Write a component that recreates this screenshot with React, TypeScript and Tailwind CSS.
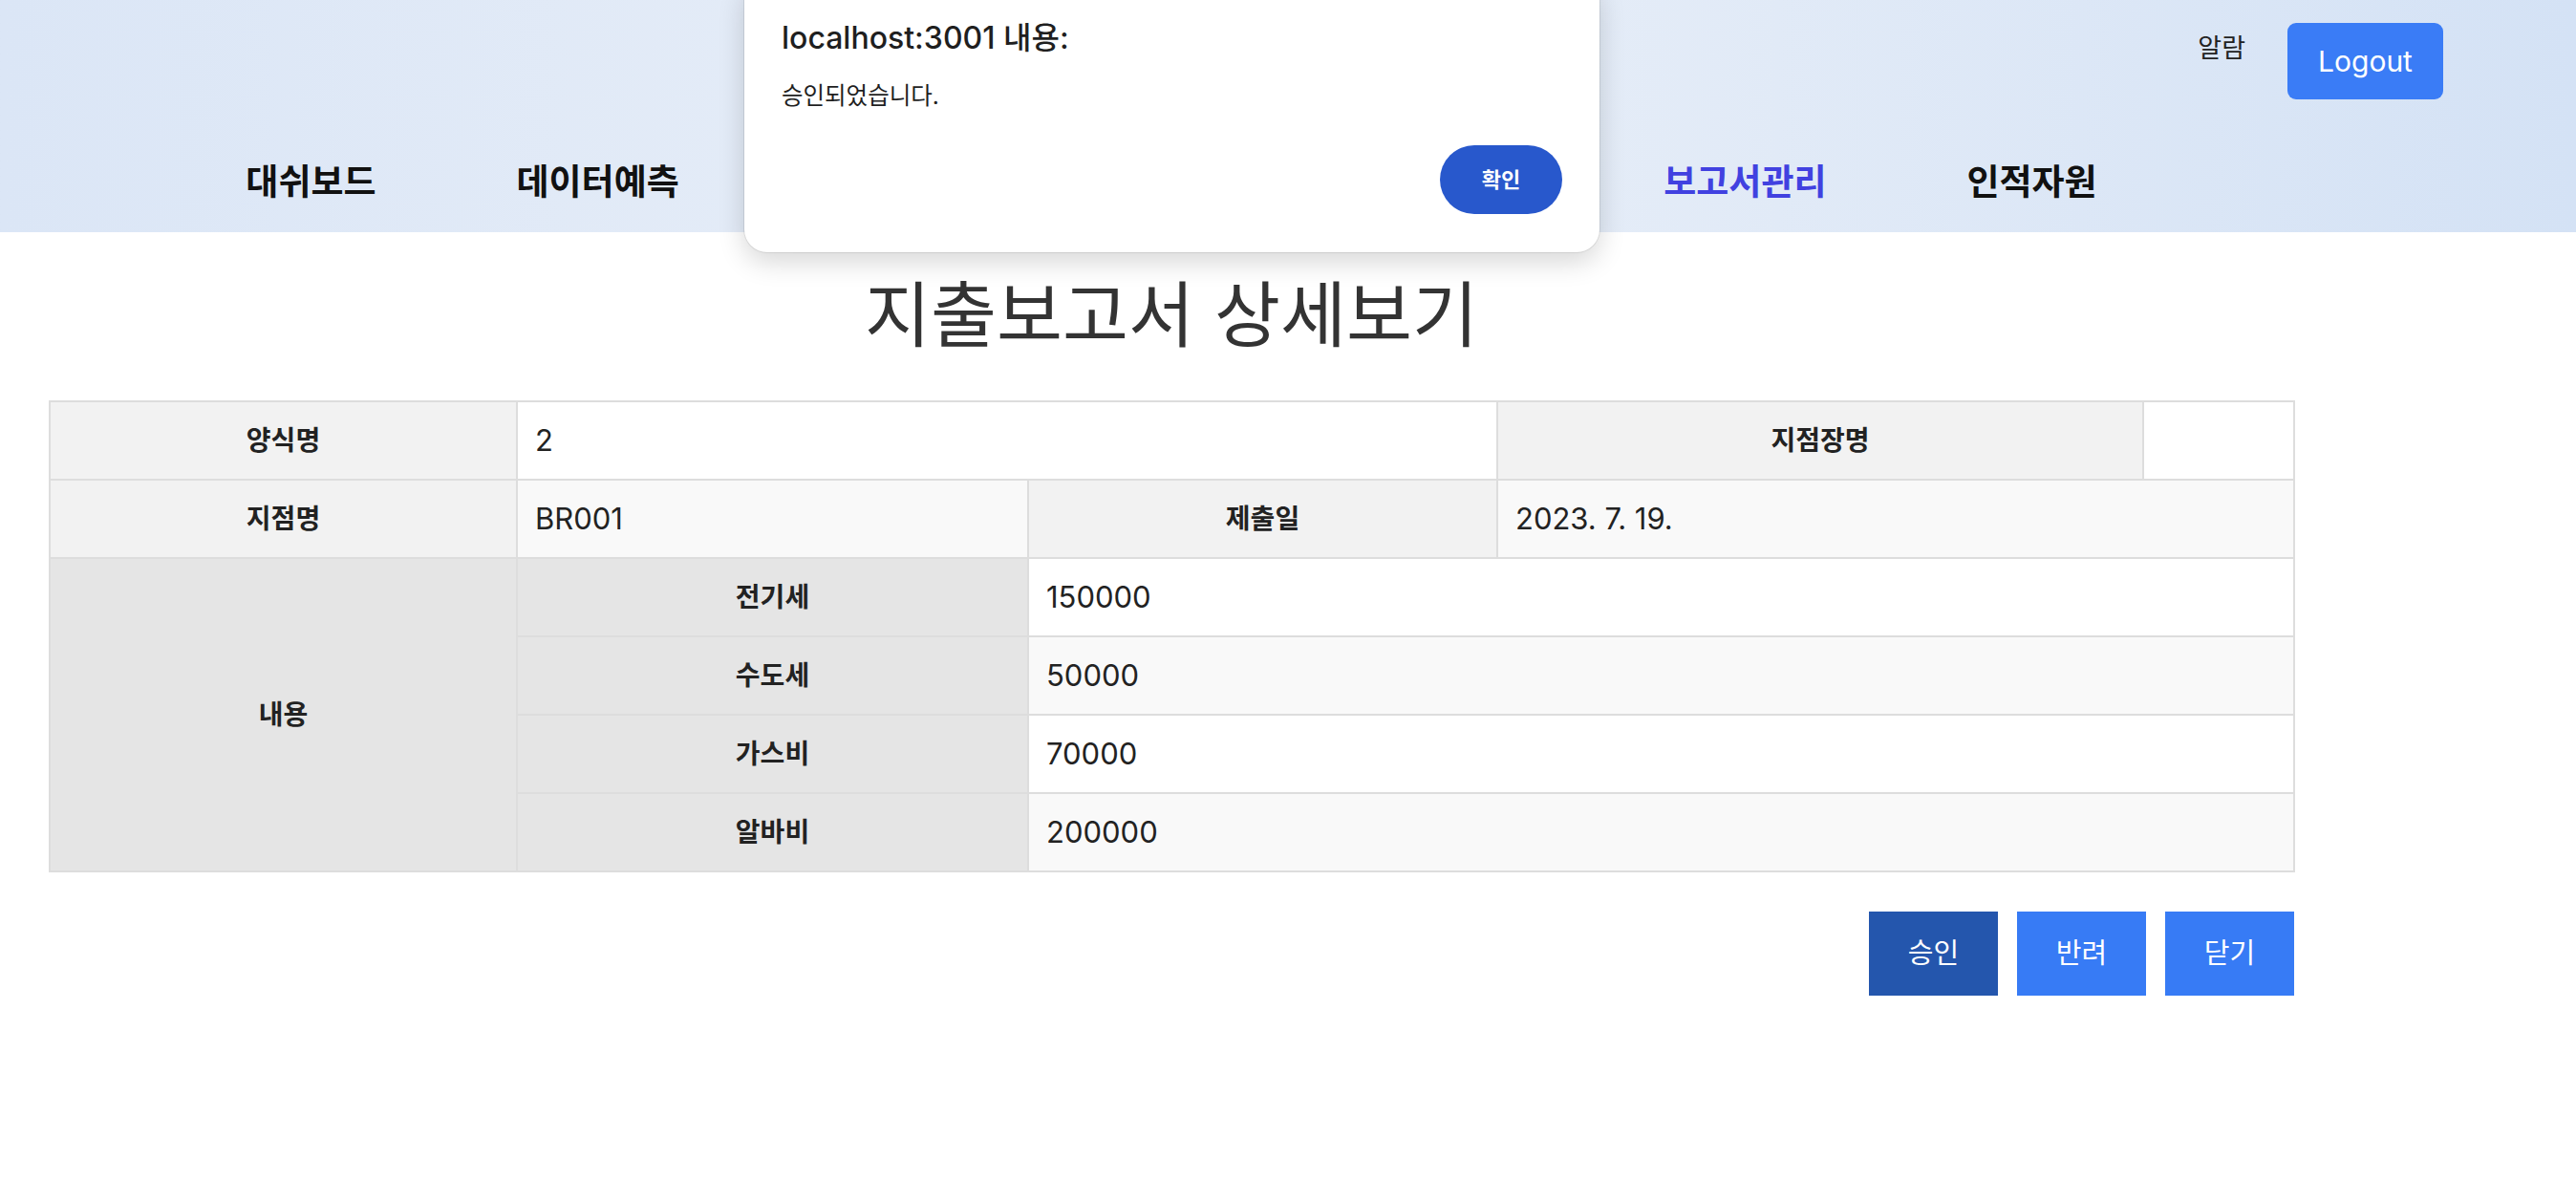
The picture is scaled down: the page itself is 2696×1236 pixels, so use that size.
import React from 'react';

const navItems = [
	{ name: '대쉬보드', active: false },
	{ name: '데이터예측', active: false },
	{ name: '재고관리', active: false },
	{ name: '발주관리', active: false },
	{ name: '가맹점관리', active: false },
	{ name: '보고서관리', active: true },
	{ name: '인적자원', active: false }
];

const expenses = [
	{ label: '전기세', value: '150000' },
	{ label: '수도세', value: '50000' },
	{ label: '가스비', value: '70000' },
	{ label: '알바비', value: '200000' }
];

const th = 'border-2 border-[#dddddd] text-[28px] font-bold text-[#222] text-center';
const td = 'border-2 border-[#dddddd] text-[31px] text-[#222] text-left pl-[18px]';

const App = () => {
	return (
		<div className="relative min-h-screen bg-white font-[family-name:Inter,'Noto_Sans_CJK_KR',sans-serif] text-[#222]">
			{/* Header */}
			<header className="h-[243px] bg-gradient-to-r from-[#dbe6f6] via-[#e9eff8] to-[#d4e2f5]">
				<div className="flex justify-end items-start gap-[44px] pt-[24px] pr-[139px]">
					<span className="mt-[6px] text-[27px] leading-[42px] text-[#222]">알람</span>
					<button className="w-[163px] h-[80px] rounded-[9px] bg-[#3a7cf6] text-white text-[30px]">
						Logout
					</button>
				</div>
				<nav className="ml-[51px] w-[2350px] mt-[64px] flex justify-center gap-[147px]">
					{navItems.map(item => (
						<span
							key={item.name}
							className={`text-[37px] leading-[46px] font-bold ${
								item.active ? 'text-[#4141e0]' : 'text-[#111]'
							}`}
						>
							{item.name}
						</span>
					))}
				</nav>
			</header>

			{/* Content */}
			<main className="ml-[51px] w-[2350px]">
				<h1 className="mt-[43px] mb-[45px] text-center text-[75px] leading-[88px] text-[#333]">
					지출보고서 상세보기
				</h1>

				<table className="w-full table-fixed border-collapse">
					<colgroup>
						<col className="w-[489px]" />
						<col className="w-[535px]" />
						<col className="w-[491px]" />
						<col className="w-[676px]" />
						<col className="w-[158px]" />
					</colgroup>
					<tbody>
						<tr className="h-[82px] bg-white">
							<th className={`${th} bg-[#f2f2f2]`}>양식명</th>
							<td className={td} colSpan={2}>2</td>
							<th className={`${th} bg-[#f2f2f2]`}>지점장명</th>
							<td className={td}></td>
						</tr>
						<tr className="h-[82px] bg-[#f9f9f9]">
							<th className={`${th} bg-[#f2f2f2]`}>지점명</th>
							<td className={td}>BR001</td>
							<th className={`${th} bg-[#f2f2f2]`}>제출일</th>
							<td className={td} colSpan={2}>2023. 7. 19.</td>
						</tr>
						{expenses.map((row, i) => (
							<tr key={row.label} className={`h-[82px] ${i % 2 === 0 ? 'bg-white' : 'bg-[#f9f9f9]'}`}>
								{i === 0 && (
									<th className={`${th} bg-[#e5e5e5]`} rowSpan={4}>내용</th>
								)}
								<th className={`${th} bg-[#e5e5e5]`}>{row.label}</th>
								<td className={td} colSpan={3}>{row.value}</td>
							</tr>
						))}
					</tbody>
				</table>

				<div className="mt-[41px] flex justify-end gap-[20px]">
					<button className="w-[135px] h-[88px] bg-[#2456ad] text-white text-[29px]">승인</button>
					<button className="w-[135px] h-[88px] bg-[#377bf5] text-white text-[29px]">반려</button>
					<button className="w-[135px] h-[88px] bg-[#377bf5] text-white text-[29px]">닫기</button>
				</div>
			</main>

			{/* Browser alert dialog */}
			<div className="absolute left-[779px] top-[-24px] w-[895px] flex flex-col pt-[44px] pb-[40px] px-[39px] bg-white rounded-[24px] shadow-[0_0_0_1px_rgba(0,0,0,0.08),0_10px_28px_rgba(0,0,0,0.16)]">
				<div className="text-[32px] leading-[40px] font-medium text-[#1f1f1f]">localhost:3001 내용:</div>
				<div className="mt-[24px] text-[24.5px] leading-[32px] text-[#1f1f1f]">승인되었습니다.</div>
				<button className="mt-[36px] self-end w-[128px] h-[72px] rounded-full bg-[#2858cc] text-white text-[22px] font-bold">
					확인
				</button>
			</div>
		</div>
	);
};

export default App;
